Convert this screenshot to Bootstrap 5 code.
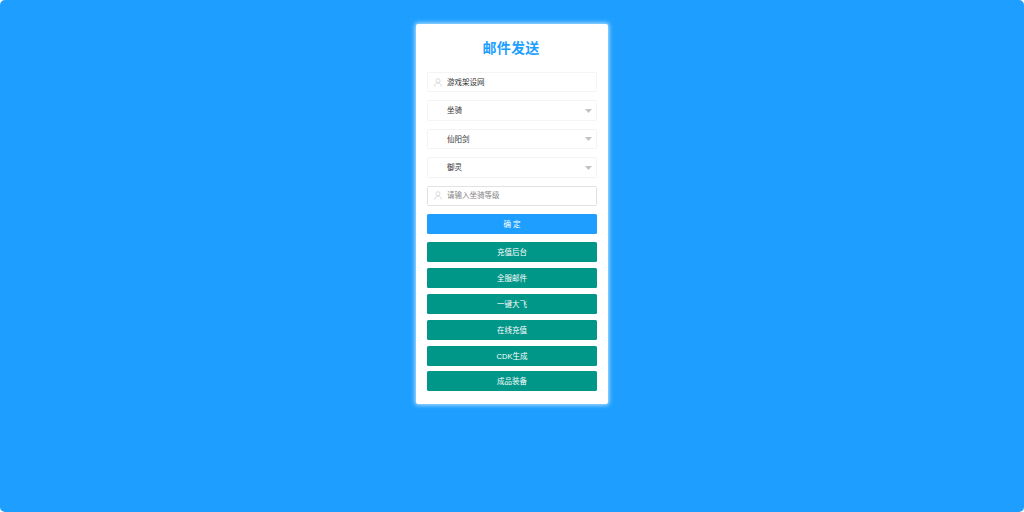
<!DOCTYPE html>
<html lang="zh">
<head>
<meta charset="utf-8">
<title>邮件发送</title>
<link href="https://cdn.jsdelivr.net/npm/bootstrap@5.3.0/dist/css/bootstrap.min.css" rel="stylesheet">
<style>
html,body{height:100%;margin:0;background:#fff;overflow:hidden}
body{font-family:"Liberation Sans","Noto Sans CJK SC",sans-serif}
.stage{height:512px;background:#1e9fff;border-radius:5px;padding-top:24px}
.panel{width:192px;height:380px;background:#fff;border-radius:2px;box-shadow:0 0 4px 1px rgba(255,255,255,.7);padding:0 11px}
.panel-title{font-size:14px;line-height:20px;font-weight:700;color:#1e9fff;text-align:center;margin:0;padding:14px 2px 14px 0;letter-spacing:.3px}
.field{position:relative;height:20.4px;margin-bottom:8px}
.field .form-control,.field .form-select{height:20.4px;min-height:0;font-size:7.5px;line-height:12px;padding:0 14px 0 19px;border-radius:1.5px;border:1px solid #f4f4f4;color:#333;box-shadow:none}
.field .form-select{padding-top:1.4px;background-image:url("data:image/svg+xml,%3Csvg xmlns='http://www.w3.org/2000/svg' width='8' height='4'%3E%3Cpath d='M0 0h8L4 4z' fill='%23c2c2c2'/%3E%3C/svg%3E");background-position:right 4.5px center;background-size:7px 3.5px}
.field .field-first{padding-bottom:1px}
.field .field-strong{border-color:#e2e2e2}
.field .form-control::placeholder{color:#858585;opacity:1}
.user-ico{position:absolute;left:6.5px;top:5.5px;width:8px;height:9px;pointer-events:none}
.act{display:block;width:100%;height:20px;padding:0;font-size:7.5px;line-height:22px;border:0;border-radius:1.5px;color:#fff;text-align:center}
.act:hover,.act:focus{color:#fff}
.act-blue{background:#1e9fff;margin-bottom:8.4px}
.act-blue:hover{background:#1e9fff}
.act-teal{background:#009688;margin-bottom:5.8px}
.act-teal:hover{background:#009688}
</style>
</head>
<body>
<main class="stage">
<form class="panel mx-auto">
<h1 class="panel-title">邮件发送</h1>
<div class="field">
<svg class="user-ico" viewBox="0 0 9 10" fill="none" stroke="#d2d2d2" stroke-width=".9"><circle cx="4.5" cy="3" r="2.3"/><path d="M.6 9.6C.9 7 2.4 5.6 4.5 5.6S8.1 7 8.4 9.6"/></svg>
<input class="form-control field-first" type="text" value="游戏架设网" aria-label="游戏架设网">
</div>
<div class="field"><select class="form-select" aria-label="类型"><option>坐骑</option></select></div>
<div class="field"><select class="form-select" aria-label="角色"><option>仙阳剑</option></select></div>
<div class="field"><select class="form-select" aria-label="物品"><option>御灵</option></select></div>
<div class="field">
<svg class="user-ico" viewBox="0 0 9 10" fill="none" stroke="#d2d2d2" stroke-width=".9"><circle cx="4.5" cy="3" r="2.3"/><path d="M.6 9.6C.9 7 2.4 5.6 4.5 5.6S8.1 7 8.4 9.6"/></svg>
<input class="form-control field-strong" type="text" placeholder="请输入坐骑等级">
</div>
<button class="btn act act-blue" type="button">确 定</button>
<a class="btn act act-teal" href="#">充值后台</a>
<a class="btn act act-teal" href="#">全服邮件</a>
<a class="btn act act-teal" href="#">一键大飞</a>
<a class="btn act act-teal" href="#">在线充值</a>
<a class="btn act act-teal" href="#">CDK生成</a>
<a class="btn act act-teal" href="#">成品装备</a>
</form>
</main>
<script src="https://cdn.jsdelivr.net/npm/bootstrap@5.3.0/dist/js/bootstrap.bundle.min.js"></script>
</body>
</html>
